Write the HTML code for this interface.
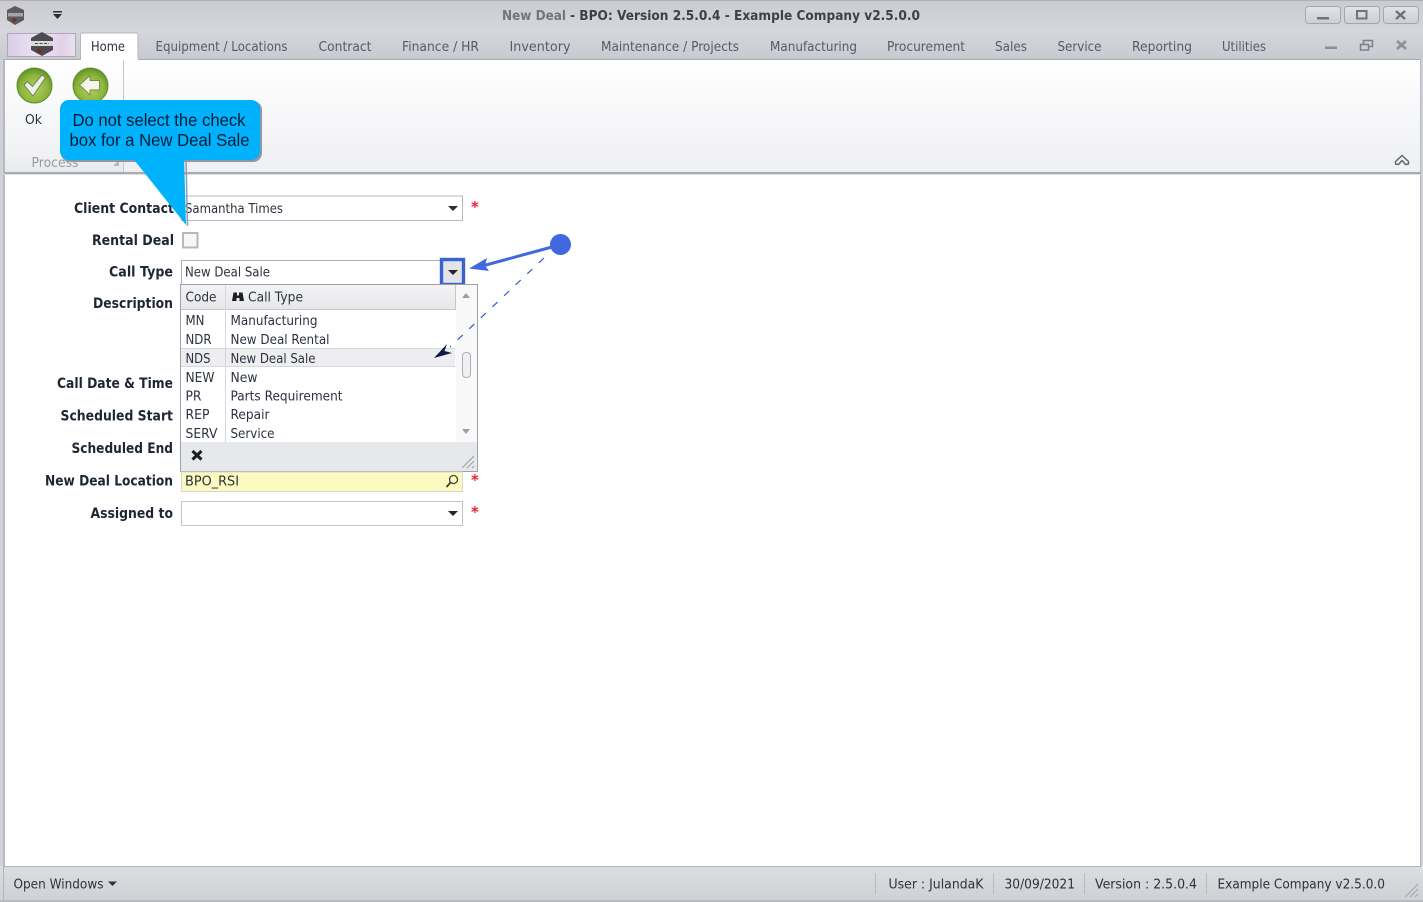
<!DOCTYPE html>
<html>
<head>
<meta charset="utf-8">
<title>New Deal - BPO</title>
<style>
html,body{margin:0;padding:0;background:#fff;width:1423px;height:902px;overflow:hidden}
svg{display:block}
text{font-family:"DejaVu Sans","Liberation Sans",sans-serif;font-size:13.5px;fill:#3a404e}
.b{font-weight:bold;fill:#1f2634;font-size:14px}
.d{fill:#2c323f}
.r{fill:#545a68}
.c{font-family:"Liberation Sans",sans-serif;font-size:17.3px;fill:#021a33}
.s{font-size:15px;font-weight:bold;fill:#ee2233}
</style>
</head>
<body>
<svg width="1423" height="902" viewBox="0 0 1423 902" xmlns="http://www.w3.org/2000/svg">
<defs>
<filter id="soft" x="0" y="0" width="100%" height="100%"><feGaussianBlur stdDeviation="0.3"/></filter>
<linearGradient id="top" x1="0" y1="0" x2="0" y2="1"><stop offset="0" stop-color="#c9cbd1"/><stop offset=".5" stop-color="#d6d7dc"/><stop offset="1" stop-color="#c8cad0"/></linearGradient>
<linearGradient id="rib" x1="0" y1="0" x2="0" y2="1"><stop offset="0" stop-color="#ffffff"/><stop offset="1" stop-color="#eeeff2"/></linearGradient>
<linearGradient id="grp" x1="0" y1="0" x2="0" y2="1"><stop offset="0" stop-color="#f3f4f6"/><stop offset="1" stop-color="#e8e9ec"/></linearGradient>
<linearGradient id="status" x1="0" y1="0" x2="0" y2="1"><stop offset="0" stop-color="#dcdde1"/><stop offset="1" stop-color="#cfd0d5"/></linearGradient>
<linearGradient id="menu" x1="0" y1="0" x2="1" y2="0"><stop offset="0" stop-color="#d9cce6"/><stop offset=".5" stop-color="#f0e7f5"/><stop offset=".8" stop-color="#e3cfe9"/><stop offset="1" stop-color="#e9e2f0"/></linearGradient>
<radialGradient id="grn" cx=".5" cy=".6" r=".6"><stop offset="0" stop-color="#b4d15f"/><stop offset=".65" stop-color="#8db53c"/><stop offset="1" stop-color="#5f8f28"/></radialGradient>
<linearGradient id="btn" x1="0" y1="0" x2="0" y2="1"><stop offset="0" stop-color="#e2e3e7"/><stop offset="1" stop-color="#cdced4"/></linearGradient>
<linearGradient id="hdr" x1="0" y1="0" x2="0" y2="1"><stop offset="0" stop-color="#f3f3f5"/><stop offset="1" stop-color="#e6e7ea"/></linearGradient>
</defs>
<g filter="url(#soft)">
<rect width="1423" height="902" fill="#d0d1d6"/>
<rect x="0" y="0" width="1423" height="59" fill="url(#top)"/>
<rect x="0" y="0" width="1423" height="1" fill="#aeb0b8"/>

<!-- app icon -->
<polygon points="15,6 24,10 24,20 15,25 7,20 7,10" fill="#5c5a5c"/>
<rect x="8" y="13" width="15" height="3.500" fill="#a5a5a7"/>
<circle cx="14" cy="20" r="2" fill="#6b3336"/>
<!-- QAT arrow -->
<rect x="53" y="11" width="9" height="1.500" fill="#2a2f3a"/>
<polygon points="53,14 62,14 57.500,19" fill="#2a2f3a"/>

<text x="502" y="20" textLength="64" lengthAdjust="spacingAndGlyphs" style="font-weight:bold;fill:#71747f">New Deal</text>
<text x="570" y="20" textLength="350" lengthAdjust="spacingAndGlyphs" style="font-weight:bold;fill:#3a3f4d">- BPO: Version 2.5.0.4 - Example Company v2.5.0.0</text>

<!-- window buttons -->
<rect x="1305.500" y="6.500" width="35" height="17" rx="3" fill="url(#btn)" stroke="#a5a7af"/>
<rect x="1344.500" y="6.500" width="35" height="17" rx="3" fill="url(#btn)" stroke="#a5a7af"/>
<rect x="1383.500" y="6.500" width="35" height="17" rx="3" fill="url(#btn)" stroke="#a5a7af"/>
<rect x="1317" y="17" width="12" height="2.500" fill="#6f727c"/>
<rect x="1357" y="11" width="9.500" height="7.500" fill="none" stroke="#6f727c" stroke-width="2"/>
<path d="M1396 11 L1405 19 M1405 11 L1396 19" stroke="#6f727c" stroke-width="2.400"/>

<!-- file menu button -->
<rect x="7.500" y="33.500" width="68" height="23" fill="url(#menu)" stroke="#a9abb4"/>
<polygon points="42,32 53,38 53,50 42,56 31,50 31,38" fill="#4e4c4f"/>
<rect x="31" y="41" width="22" height="5" fill="#d9d9d9"/>
<path d="M35 43.500h14" stroke="#4a4a4a" stroke-width="1" stroke-dasharray="3 1.500"/>
<circle cx="39" cy="51" r="2.500" fill="#70292d"/>

<!-- tabs -->
<path d="M80.500 59 V35 Q80.500 33 82.500 33 H136 Q138 33 138 35 V59" fill="#fff" stroke="#b5b7be"/>
<text x="91" y="51" textLength="34" lengthAdjust="spacingAndGlyphs" class="d">Home</text>
<text x="155.500" y="51" textLength="132" lengthAdjust="spacingAndGlyphs" class="r">Equipment / Locations</text>
<text x="318.500" y="51" textLength="53" lengthAdjust="spacingAndGlyphs" class="r">Contract</text>
<text x="402" y="51" textLength="77" lengthAdjust="spacingAndGlyphs" class="r">Finance / HR</text>
<text x="509.500" y="51" textLength="61" lengthAdjust="spacingAndGlyphs" class="r">Inventory</text>
<text x="601" y="51" textLength="138" lengthAdjust="spacingAndGlyphs" class="r">Maintenance / Projects</text>
<text x="770" y="51" textLength="87" lengthAdjust="spacingAndGlyphs" class="r">Manufacturing</text>
<text x="887" y="51" textLength="78" lengthAdjust="spacingAndGlyphs" class="r">Procurement</text>
<text x="995" y="51" textLength="32" lengthAdjust="spacingAndGlyphs" class="r">Sales</text>
<text x="1057.500" y="51" textLength="44" lengthAdjust="spacingAndGlyphs" class="r">Service</text>
<text x="1132" y="51" textLength="60" lengthAdjust="spacingAndGlyphs" class="r">Reporting</text>
<text x="1222" y="51" textLength="44" lengthAdjust="spacingAndGlyphs" class="r">Utilities</text>
<rect x="1325" y="46.500" width="12" height="2.500" fill="#8b8e98"/>
<rect x="1363.500" y="40.500" width="9" height="6" fill="none" stroke="#7c7f8a" stroke-width="1.500"/>
<rect x="1360.500" y="44.500" width="8" height="5.500" fill="#d0d1d6" stroke="#7c7f8a" stroke-width="1.500"/>
<path d="M1397 41 L1406 49 M1406 41 L1397 49" stroke="#8b8e98" stroke-width="2.600"/>

<!-- ribbon -->
<rect x="4" y="59" width="1416" height="113" fill="url(#rib)"/>
<rect x="4" y="59" width="1416" height="1" fill="#a9abb3"/>
<rect x="81" y="58" width="57" height="2" fill="#fff"/>
<rect x="3" y="59" width="2" height="114" fill="#b7b9c0"/>
<rect x="1420" y="59" width="1" height="114" fill="#b7b9c0"/>
<rect x="123" y="60" width="1" height="112" fill="#c6c8cd"/>
<rect x="5" y="150" width="118" height="22" fill="url(#grp)"/>
<text x="31.500" y="167" textLength="47" lengthAdjust="spacingAndGlyphs" style="fill:#989ba3">Process</text>
<polygon points="119,160 119,166 113,166" fill="#b4b6bc"/>
<rect x="4" y="172" width="1417" height="2" fill="#a9abb3"/>
<rect x="4" y="174" width="1417" height="1" fill="#dfe0e3"/>

<!-- ok icon -->
<circle cx="34.500" cy="85.500" r="17.500" fill="url(#grn)" stroke="#5d8c2a"/>
<path d="M24 85 L27.500 81.500 L32.500 86.500 L42 75 L45.500 77.500 L33 96 Z" fill="#edf1e4" stroke="#6f7c5c" stroke-width=".9" stroke-linejoin="round"/>
<text x="25" y="124" textLength="17" lengthAdjust="spacingAndGlyphs" class="d">Ok</text>
<!-- back icon -->
<circle cx="90.500" cy="85.500" r="17.500" fill="url(#grn)" stroke="#5d8c2a"/>
<path d="M79.500 85 L90 75.500 V80.500 H99.500 V90 H90 V95 Z" fill="#f2f5e8" stroke="#6f8a40" stroke-width=".9" stroke-linejoin="round"/>

<!-- content -->
<rect x="5" y="175" width="1415" height="691" fill="#fff"/>
<rect x="3" y="175" width="2" height="691" fill="#b9bbc1"/>
<rect x="1420" y="175" width="1" height="691" fill="#b2b4bb"/>

<!-- collapse -->
<path d="M1395.500 161.500 L1402 155.500 L1408.500 161.500 V164 L1405.500 164.500 L1402 160.500 L1398.500 164.500 L1395.500 164 Z" fill="none" stroke="#5f626b" stroke-width="1.400" stroke-linejoin="round"/>

<!-- labels -->
<text class="b" x="74" y="213" textLength="100" lengthAdjust="spacingAndGlyphs">Client Contact</text>
<text class="b" x="92" y="245" textLength="82" lengthAdjust="spacingAndGlyphs">Rental Deal</text>
<text class="b" x="109" y="276.500" textLength="64" lengthAdjust="spacingAndGlyphs">Call Type</text>
<text class="b" x="93" y="308" textLength="80" lengthAdjust="spacingAndGlyphs">Description</text>
<text class="b" x="57" y="388" textLength="116" lengthAdjust="spacingAndGlyphs">Call Date &amp; Time</text>
<text class="b" x="60.500" y="420.500" textLength="112.500" lengthAdjust="spacingAndGlyphs">Scheduled Start</text>
<text class="b" x="71.500" y="453" textLength="101.500" lengthAdjust="spacingAndGlyphs">Scheduled End</text>
<text class="b" x="45" y="485.500" textLength="128" lengthAdjust="spacingAndGlyphs">New Deal Location</text>
<text class="b" x="90.500" y="518" textLength="82.500" lengthAdjust="spacingAndGlyphs">Assigned to</text>

<!-- client contact field -->
<rect x="181.500" y="196" width="281" height="24.500" fill="#fff" stroke="#b6b8be"/>
<text x="185" y="213" textLength="98" lengthAdjust="spacingAndGlyphs" class="d">Samantha Times</text>
<polygon points="448,206 458,206 453,211" fill="#2b2d33"/>
<text class="s" x="471" y="212">*</text>

<!-- checkbox -->
<rect x="183" y="233" width="14.500" height="14.500" fill="#f7f7f9" stroke="#b6b8be" stroke-width="2"/>

<!-- call type -->
<rect x="181.500" y="260.500" width="281" height="24" fill="#fff" stroke="#aeb0b6"/>
<text x="185" y="276.500" textLength="85" lengthAdjust="spacingAndGlyphs" class="d">New Deal Sale</text>
<rect x="441.500" y="259.500" width="22" height="25" fill="#e3e4e8" stroke="#3a62d0" stroke-width="3.400"/>
<polygon points="448,270 458,270 453,275" fill="#24262b"/>

<!-- dropdown -->
<rect x="180.500" y="284.500" width="297" height="187" fill="#fff" stroke="#9fa1a8"/>
<rect x="181" y="285" width="274" height="24" fill="url(#hdr)"/>
<rect x="181" y="309" width="274" height="1" fill="#c4c6cb"/>
<rect x="225" y="285" width="1" height="157" fill="#d8d9dd"/>
<rect x="455" y="285" width="1" height="25" fill="#c4c6cb"/>
<rect x="456" y="285" width="21" height="157" fill="#f8f8f9"/>
<text x="185.500" y="301.500" textLength="31" lengthAdjust="spacingAndGlyphs" class="d">Code</text>
<path d="M232 301 L233.500 292.500 H237 V295.500 H239 V292.500 H242.500 L244 301 H239.500 V298 H236.500 V301 Z" fill="#1d1f25"/>
<text x="248" y="301.500" textLength="55" lengthAdjust="spacingAndGlyphs" class="d">Call Type</text>
<polygon points="462,298 470,298 466,293" fill="#9c9ea5"/>

<rect x="181" y="348" width="274" height="19" fill="#eeeef1"/>
<path d="M181 348.500H455M181 366.500H455" stroke="#d6d7db"/>
<rect x="225" y="348" width="1" height="19" fill="#d3d4d8"/>

<text x="185.500" y="325" textLength="19" lengthAdjust="spacingAndGlyphs" class="d">MN</text>
<text x="230.500" y="325" textLength="87" lengthAdjust="spacingAndGlyphs" class="d">Manufacturing</text>
<text x="185.500" y="344" textLength="26" lengthAdjust="spacingAndGlyphs" class="d">NDR</text>
<text x="230.500" y="344" textLength="99" lengthAdjust="spacingAndGlyphs" class="d">New Deal Rental</text>
<text x="185.500" y="363" textLength="25" lengthAdjust="spacingAndGlyphs" class="d">NDS</text>
<text x="230.500" y="363" textLength="85" lengthAdjust="spacingAndGlyphs" class="d">New Deal Sale</text>
<text x="185.500" y="382" textLength="29" lengthAdjust="spacingAndGlyphs" class="d">NEW</text>
<text x="230.500" y="382" textLength="27" lengthAdjust="spacingAndGlyphs" class="d">New</text>
<text x="185.500" y="400.500" textLength="16" lengthAdjust="spacingAndGlyphs" class="d">PR</text>
<text x="230.500" y="400.500" textLength="112" lengthAdjust="spacingAndGlyphs" class="d">Parts Requirement</text>
<text x="185.500" y="419" textLength="24" lengthAdjust="spacingAndGlyphs" class="d">REP</text>
<text x="230.500" y="419" textLength="39" lengthAdjust="spacingAndGlyphs" class="d">Repair</text>
<text x="185.500" y="438" textLength="32" lengthAdjust="spacingAndGlyphs" class="d">SERV</text>
<text x="230.500" y="438" textLength="44" lengthAdjust="spacingAndGlyphs" class="d">Service</text>

<rect x="462.500" y="352.500" width="8" height="25" rx="3.500" fill="#f1f1f3" stroke="#aeb0b6"/>
<polygon points="462,429 470,429 466,434" fill="#9c9ea5"/>
<rect x="181" y="442" width="296" height="29" fill="#e7e8eb"/>
<path d="M192.500 451 L201.500 459.500 M201.500 451 L192.500 459.500" stroke="#1b1d22" stroke-width="3"/>
<path d="M462 468 L474 456 M467 468 L474 461 M472 468 L474 466" stroke="#9c9ea5" stroke-width="1"/>

<!-- location -->
<rect x="181.500" y="472" width="281" height="19.500" fill="#fbfbc0" stroke="#d6d7d0"/>
<text x="185" y="485.500" textLength="54" lengthAdjust="spacingAndGlyphs" class="d">BPO_RSI</text>
<circle cx="453.500" cy="479.500" r="4" fill="none" stroke="#3c3f47" stroke-width="1.300"/>
<path d="M450.500 482.500 L446.500 487" stroke="#3c3f47" stroke-width="1.800"/>
<text class="s" x="471" y="485">*</text>

<!-- assigned -->
<rect x="181.500" y="501.500" width="281" height="24" fill="#fff" stroke="#c2c4c9"/>
<polygon points="448,511 458,511 453,516" fill="#24262b"/>
<text class="s" x="471" y="517">*</text>

<!-- annotations -->
<circle cx="560.500" cy="244.500" r="10.500" fill="#4169e1"/>
<path d="M552 247 L484 265.500" stroke="#4169e1" stroke-width="3"/>
<polygon points="469,268.500 487,258 485,265.500 489,271" fill="#4169e1"/>
<path d="M544 258 L450 347" stroke="#3358cc" stroke-width="1.200" stroke-dasharray="7 9" fill="none"/>
<polygon points="434,358 447,344 444.500,351 452,353" fill="#0a1a44"/>

<!-- callout -->
<path d="M186 158 L187.500 226" stroke="#8fa0ad" stroke-width="1.500" fill="none"/>
<rect x="61" y="101" width="201" height="61" rx="9" fill="#8d98a3"/>
<rect x="60" y="100" width="200" height="60" rx="9" fill="#00b2fb"/>
<path d="M131 156 L186 225 L184 156 Z" fill="#00b2fb"/>
<text class="c" x="72.500" y="126" textLength="173" lengthAdjust="spacingAndGlyphs">Do not select the check</text>
<text class="c" x="69.500" y="146" textLength="180" lengthAdjust="spacingAndGlyphs">box for a New Deal Sale</text>

<!-- status bar -->
<rect x="0" y="866" width="1423" height="36" fill="url(#status)"/>
<rect x="3" y="866" width="1418" height="1" fill="#b2b4bb"/>
<rect x="0" y="900" width="1423" height="2" fill="#b9bbc1"/>
<rect x="3" y="866" width="1" height="34" fill="#b2b4bb"/>
<text x="13.500" y="888.500" textLength="90" lengthAdjust="spacingAndGlyphs" class="d">Open Windows</text>
<polygon points="108,881.500 117,881.500 112.500,886" fill="#33363e"/>
<path d="M875.500 873V894M993.500 873V894M1084.500 873V894M1206.500 873V894" stroke="#b9bbc1"/>
<text x="888.500" y="888.500" textLength="95" lengthAdjust="spacingAndGlyphs" class="d">User : JulandaK</text>
<text x="1004.500" y="888.500" textLength="70.500" lengthAdjust="spacingAndGlyphs" class="d">30/09/2021</text>
<text x="1095" y="888.500" textLength="102" lengthAdjust="spacingAndGlyphs" class="d">Version : 2.5.0.4</text>
<text x="1217.500" y="888.500" textLength="167.500" lengthAdjust="spacingAndGlyphs" class="d">Example Company v2.5.0.0</text>
<path d="M1405 897 L1418 884 M1410 897 L1418 889 M1415 897 L1418 894" stroke="#a3a5ac" stroke-width="1"/>
</g>
</svg>
</body>
</html>
